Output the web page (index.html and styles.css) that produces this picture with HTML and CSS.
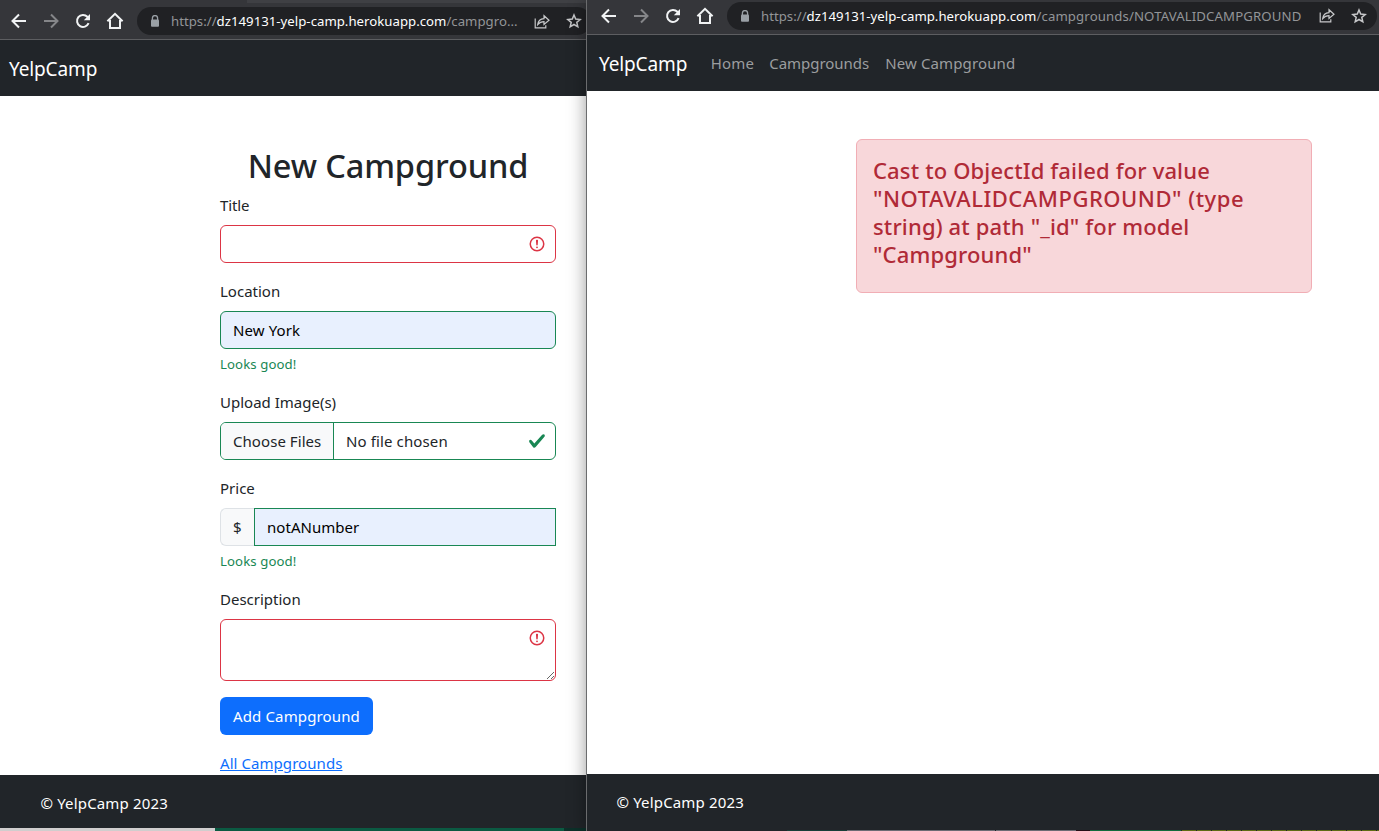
FILE: index.html
```html
<!DOCTYPE html>
<html lang="en">
<head>
<meta charset="utf-8">
<title>YelpCamp</title>
<link rel="stylesheet" href="styles.css">
</head>
<body>
<svg class="defs" width="0" height="0">
  <symbol id="back" viewBox="0 0 16 16"><path d="M15 8H2.200M8 1.500 1.500 8 8 14.500" fill="none" stroke="currentColor" stroke-width="2"/></symbol>
  <symbol id="forward" viewBox="0 0 16 16"><path d="M1 8h12.800M8 1.500 14.500 8 8 14.500" fill="none" stroke="currentColor" stroke-width="2"/></symbol>
  <symbol id="reload" viewBox="0 0 16 16"><path d="M13.600 10.200A6 6 0 1 1 12.400 3.800L14 5.400" fill="none" stroke="currentColor" stroke-width="2"/><path d="M15 1v6.200H8.800z" fill="currentColor"/></symbol>
  <symbol id="home" viewBox="0 0 18 18"><path d="M1.400 9.300 9 1.800l7.600 7.500M4 8v8h10V8" fill="none" stroke="currentColor" stroke-width="2"/></symbol>
  <symbol id="lock" viewBox="0 0 10 12"><path d="M2.400 5V3.200a2.600 2.600 0 0 1 5.200 0V5" fill="none" stroke="currentColor" stroke-width="1.300"/><rect x="1" y="4.400" width="8" height="7.400" rx="1" fill="currentColor"/></symbol>
  <symbol id="share" viewBox="0 0 16 15"><path d="M1.200 4.500v9.300h10.600v-2.600M3.700 10.600c.5-3.800 2.800-5.700 6.300-5.900V1.700L15 6.200l-5 4.300V7.700c-2.700 0-4.600.9-6.300 2.900z" fill="none" stroke="currentColor" stroke-width="1.200"/></symbol>
  <symbol id="star" viewBox="0 0 16 16"><path d="m8 2 1.700 4.100 4.500.4-3.400 2.900 1 4.400L8 11.500l-3.800 2.300 1-4.400-3.400-2.900 4.500-.4z" fill="none" stroke="currentColor" stroke-width="1.500"/></symbol>
  <symbol id="invalid" viewBox="0 0 12 12"><circle cx="6" cy="6" r="4.500" fill="none" stroke="currentColor"/><path d="M5.800 3.600h.4L6 6.500z" fill="none" stroke="currentColor" stroke-linejoin="round"/><circle cx="6" cy="8.200" r=".6" fill="currentColor"/></symbol>
  <symbol id="valid" viewBox="0 0 8 8"><path fill="currentColor" d="M2.300 6.730.600 4.530c-.4-1.040.460-1.400 1.100-.8l1.100 1.400 3.400-3.800c.6-.630 1.600-.270 1.200.700l-4 4.600c-.430.500-.8.400-1.100.100z"/></symbol>
</svg>
<div class="desktop">
  <section class="window window-form">
    <header class="toolbar">
      <svg class="ic"><use href="#back"/></svg>
      <svg class="ic off"><use href="#forward"/></svg>
      <svg class="ic"><use href="#reload"/></svg>
      <svg class="ic home"><use href="#home"/></svg>
      <div class="address">
        <svg class="lock"><use href="#lock"/></svg>
        <p class="url"><span>https://</span><b>dz149131-yelp-camp.herokuapp.com</b><span>/campgro...</span></p>
        <svg class="share"><use href="#share"/></svg>
        <svg class="star"><use href="#star"/></svg>
      </div>
    </header>
    <nav class="navbar"><a class="brand">YelpCamp</a></nav>
    <main class="form-page">
      <form class="form">
        <h1>New Campground</h1>
        <div class="field">
          <label class="tight">Title</label>
          <div class="control invalid"><svg class="mark"><use href="#invalid"/></svg></div>
        </div>
        <div class="field">
          <label>Location</label>
          <div class="control valid filled">New York</div>
          <small>Looks good!</small>
        </div>
        <div class="field">
          <label>Upload Image(s)</label>
          <div class="control valid file"><span class="choose">Choose Files</span><span>No file chosen</span><svg class="mark"><use href="#valid"/></svg></div>
        </div>
        <div class="field">
          <label>Price</label>
          <div class="group"><span class="prefix">$</span><div class="control valid filled square">notANumber</div></div>
          <small>Looks good!</small>
        </div>
        <div class="field">
          <label>Description</label>
          <div class="area"><textarea class="control invalid"></textarea><svg class="mark"><use href="#invalid"/></svg></div>
        </div>
        <button type="button" class="btn">Add Campground</button>
        <a class="link" href="#">All Campgrounds</a>
      </form>
    </main>
    <footer class="footer">© YelpCamp 2023</footer>
    <div class="strip strip-form"></div>
  </section>
  <section class="window window-error">
    <header class="toolbar">
      <svg class="ic"><use href="#back"/></svg>
      <svg class="ic off"><use href="#forward"/></svg>
      <svg class="ic"><use href="#reload"/></svg>
      <svg class="ic home"><use href="#home"/></svg>
      <div class="address">
        <svg class="lock"><use href="#lock"/></svg>
        <p class="url"><span>https://</span><b>dz149131-yelp-camp.herokuapp.com</b><span class="path">/campgrounds/NOTAVALIDCAMPGROUND</span></p>
        <svg class="share"><use href="#share"/></svg>
        <svg class="star"><use href="#star"/></svg>
      </div>
    </header>
    <nav class="navbar"><a class="brand">YelpCamp</a><a class="nav-home">Home</a><a class="nav-list">Campgrounds</a><a>New Campground</a></nav>
    <main class="error-page">
      <div class="alert"><h4>Cast to ObjectId failed for value<br><span class="wide">"NOTAVALIDCAMPGROUND" (type</span><br>string) at path "_id" for model<br>"Campground"</h4></div>
    </main>
    <footer class="footer">© YelpCamp 2023</footer>
    <div class="strip strip-error"></div>
  </section>
</div>
</body>
</html>
```

FILE: styles.css
```css
* { box-sizing: border-box; }
body {
  margin: 0;
  overflow: hidden;
  font: 15px/24px "Noto Sans", "Open Sans", sans-serif;
  letter-spacing: 0.12px;
  color: #212529;
}
.defs { position: absolute; }
.desktop { display: grid; grid-template-columns: 586px 793px; height: 831px; }
.window { display: flex; flex-direction: column; min-width: 0; height: 831px; background: #fff; }
.window-form { overflow: hidden; }
.window-error { position: relative; border-left: 1px solid #6b6c6e; box-shadow: 0 2px 17px rgba(0, 0, 0, 0.4); }

/* Browser toolbar */
.toolbar {
  display: flex;
  align-items: center;
  flex: none;
  height: 35px;
  padding: 0 0 3px 14px;
  background: #35363a;
  border-bottom: 1px solid #5d5e61;
}
.window-form .toolbar {
  height: 40px;
  padding: 3px 0 0 11px;
  background: linear-gradient(#3f4044, #3f4044) 247px 0 / 339px 3px no-repeat #35363a;
}
.ic { flex: none; width: 16px; height: 16px; margin-right: 16px; color: #f1f3f4; }
.ic.off { color: #858689; }
.ic.home { width: 18px; height: 18px; margin: 0 12px 0 -1px; }
.window-form .ic.home { margin-right: 13px; }
.address {
  display: flex;
  align-items: center;
  flex: none;
  width: 650px;
  height: 28px;
  margin-left: 1px;
  padding-left: 13px;
  border-radius: 14px;
  background: #202124;
}
.window-form .address { width: 454px; margin-left: 0; }
.lock { flex: none; width: 10px; height: 12px; color: #9aa0a6; }
.url {
  flex: none;
  width: 546px;
  margin: 0 12px 0 11px;
  font-size: 13.2px;
  letter-spacing: 0.02px;
  white-space: nowrap;
  color: #939598;
}
.window-form .url { width: 351px; }
.url b { font-weight: 400; color: #fff; }
.url .path { letter-spacing: 0.12px; }
.share { flex: none; width: 16px; height: 15px; margin-right: 16px; color: #c7c8ca; }
.star { flex: none; width: 16px; height: 16px; color: #c7c8ca; }

/* Site chrome */
.navbar {
  display: flex;
  align-items: center;
  flex: none;
  height: 56px;
  padding-left: 12px;
  background: #212529;
  color: #9b9d9f;
}
.window-form .navbar { padding-left: 9px; }
.brand { margin-right: 23.5px; padding-top: 2px; font-size: 19px; letter-spacing: -0.13px; color: #fff; }
.nav-home { margin-right: 15px; letter-spacing: 0.2px; }
.nav-list { margin-right: 16px; letter-spacing: -0.02px; }
.footer { flex: none; height: 56px; padding: 16px 29.5px; background: #212529; color: #fff; letter-spacing: 0.16px; }
.window-form .footer { height: 53px; padding-left: 40.5px; }

/* Campground form */
.form-page { flex: none; height: 679px; padding: 49px 30px 0 220px; }
.form { display: flex; flex-direction: column; }
h1 {
  margin: 0 0 7px;
  font-size: 32.5px;
  font-weight: 500;
  line-height: 41px;
  letter-spacing: -0.1px;
  text-align: center;
}
.field { display: flex; flex-direction: column; margin-bottom: 16px; }
label { margin-bottom: 8px; letter-spacing: 0; }
label.tight { letter-spacing: -0.15px; }
.control {
  display: flex;
  align-items: center;
  position: relative;
  height: 38px;
  padding: 0 12px;
  border: 1px solid;
  border-radius: 6px;
}
.control.invalid { border-color: #dc3545; }
.control.valid { border-color: #198754; }
.control.filled { background: #e8f0fe; color: #000; }
.control.file { padding-left: 0; overflow: hidden; }
.choose {
  display: flex;
  align-items: center;
  flex: none;
  width: 113px;
  height: 36px;
  margin-right: 12px;
  padding-left: 12px;
  border-right: 1px solid #198754;
  background: #f8f9fa;
  letter-spacing: 0.06px;
}
.group { display: grid; grid-template-columns: 34px 1fr; }
.prefix {
  padding: 6px 0 0 12px;
  border: 1px solid #dee2e6;
  border-right: 0;
  border-radius: 6px 0 0 6px;
  background: #f8f9fa;
}
.control.square { border-radius: 0; letter-spacing: 0.04px; }
.mark { position: absolute; top: 9px; right: 9px; width: 18px; height: 18px; color: #dc3545; }
.valid .mark { color: #198754; }
small { margin-top: 5px; font-size: 13.2px; line-height: 20px; letter-spacing: 0.1px; color: #198754; }
.area { display: flex; position: relative; }
.area .mark { top: 10px; right: 10px; }
textarea.control { width: 100%; height: 62px; resize: vertical; background: #fff; }
.btn {
  align-self: flex-start;
  width: 153px;
  height: 38px;
  margin-bottom: 16px;
  padding: 0;
  border: 0;
  border-radius: 6px;
  background: #0d6efd;
  color: #fff;
  font: inherit;
  letter-spacing: 0.14px;
}
.link { align-self: flex-start; letter-spacing: 0.06px; color: #0d6efd; }

/* Error message */
.error-page { flex: 1; padding: 48px 67px 0 269px; }
.alert {
  height: 154px;
  padding: 16px;
  border: 1px solid #f1aeb5;
  border-radius: 6px;
  background: #f8d7da;
}
.alert h4 { margin: 0; font-size: 22px; font-weight: 500; line-height: 28px; letter-spacing: 0.15px; white-space: nowrap; color: #b02a37; }
.alert .wide { letter-spacing: 0.52px; }

/* Slivers of the windows behind */
.strip-form { flex: none; height: 3px; background: linear-gradient(90deg, #d0cece 215px, #0b5a42 215px 564px, #0c3029 564px); }
.strip-error {
  flex: none;
  height: 1px;
  background:
    repeating-linear-gradient(90deg, #5f6b14 0 14px, #212529 14px 15px) 595px 0 / 198px 1px no-repeat,
    linear-gradient(90deg, #212529 200px, #173e37 200px 260px, #6b6b73 260px 408px, #212529 408px 409px, #6b6b73 409px 489px, #240f17 489px 503px, #126b3c 503px 594px, #212529 594px);
}
```
